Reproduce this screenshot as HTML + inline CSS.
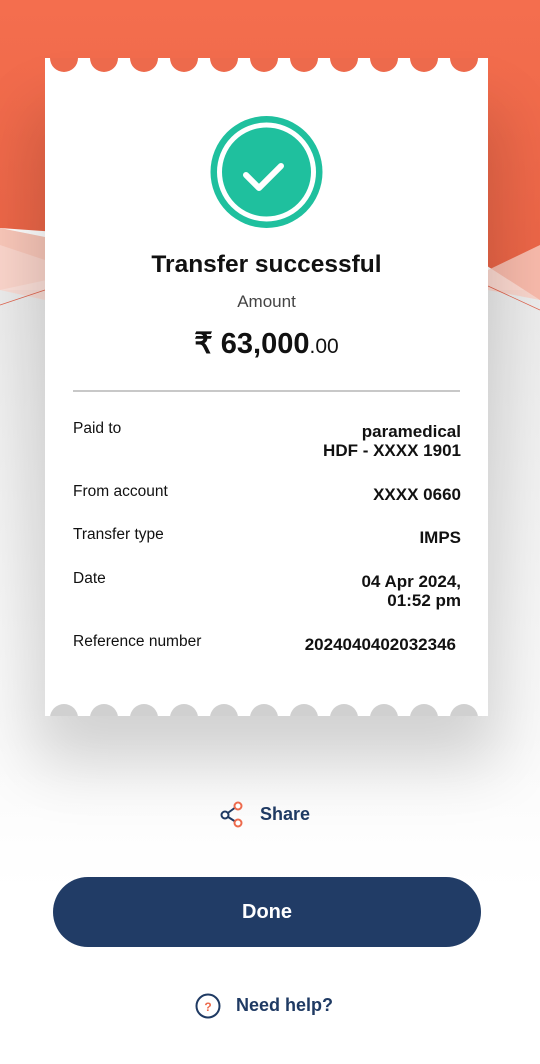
<!DOCTYPE html>
<html><head><meta charset="utf-8"><style>
*{margin:0;padding:0;box-sizing:border-box}
body{width:540px;height:1064px;position:relative;overflow:hidden;background:#fff;font-family:"Liberation Sans",Arial,sans-serif}
.bg{position:absolute;left:0;top:0}
.shadow{position:absolute;left:45px;top:80px;width:443px;height:634px;box-shadow:0 40px 60px 10px rgba(0,0,0,0.16);}
.card{position:absolute;left:45px;top:58px;width:443px;height:658px;background:#fff}
.t{position:absolute;white-space:nowrap}
.lab{left:28px;font-size:15.5px;color:#111}
.val{right:27px;text-align:right;font-size:17px;font-weight:bold;color:#111;line-height:19px}
</style></head><body>
<svg class="bg" width="540" height="1064">
<defs>
<linearGradient id="og" x1="0" y1="0" x2="0" y2="1"><stop offset="0" stop-color="#f46e4e"/><stop offset="1" stop-color="#ea6446"/></linearGradient>
<linearGradient id="gg" x1="0" y1="0" x2="0" y2="1"><stop offset="0" stop-color="#ececec"/><stop offset="1" stop-color="#fff"/></linearGradient>
</defs>
<rect x="0" y="290" width="540" height="600" fill="url(#gg)"/>
<path d="M0 0H540V300L470 255L300 240L100 235L0 228Z" fill="url(#og)"/>
<path d="M0 228L60 240L140 260L0 290Z" fill="#f7b9a8" opacity="0.8"/>
<path d="M0 245L45 260L45 300L0 290Z" fill="#fbd8cf" opacity="0.8"/>
<path d="M488 270L540 245L540 300L488 290Z" fill="#fbd0c4" opacity="0.8"/>
<line x1="0" y1="305" x2="45" y2="290" stroke="#e0604a" stroke-width="0.7"/>
<line x1="488" y1="286" x2="540" y2="310" stroke="#e0604a" stroke-width="0.7"/>
</svg>
<div class="shadow"></div>
<div class="card">
<svg width="443" height="658" style="position:absolute;left:0;top:0">
<g fill="#ed6a4c">
<circle cx="19" cy="0" r="14"/><circle cx="59" cy="0" r="14"/><circle cx="99" cy="0" r="14"/><circle cx="139" cy="0" r="14"/><circle cx="179" cy="0" r="14"/><circle cx="219" cy="0" r="14"/><circle cx="259" cy="0" r="14"/><circle cx="299" cy="0" r="14"/><circle cx="339" cy="0" r="14"/><circle cx="379" cy="0" r="14"/><circle cx="419" cy="0" r="14"/>
</g>
<g fill="#d0d0d0">
<circle cx="19" cy="660" r="14"/><circle cx="59" cy="660" r="14"/><circle cx="99" cy="660" r="14"/><circle cx="139" cy="660" r="14"/><circle cx="179" cy="660" r="14"/><circle cx="219" cy="660" r="14"/><circle cx="259" cy="660" r="14"/><circle cx="299" cy="660" r="14"/><circle cx="339" cy="660" r="14"/><circle cx="379" cy="660" r="14"/><circle cx="419" cy="660" r="14"/>
</g>
<circle cx="221.5" cy="114" r="56" fill="#1fc09e"/>
<circle cx="221.5" cy="114" r="47" fill="none" stroke="#fff" stroke-width="5"/>
<path d="M201 117L214 130L236 108" fill="none" stroke="#fff" stroke-width="6" stroke-linecap="round" stroke-linejoin="round"/>
<line x1="28" y1="333" x2="415" y2="333" stroke="#c8c8c8" stroke-width="2"/>
</svg>
<div class="t" style="left:0;width:443px;text-align:center;top:193px;font-size:24.5px;font-weight:bold;color:#111">Transfer successful</div>
<div class="t" style="left:0;width:443px;text-align:center;top:234px;font-size:17px;color:#444">Amount</div>
<div class="t" style="left:0;width:443px;text-align:center;top:268px;font-size:29px;font-weight:bold;color:#111">₹ 63,000<span style="font-size:21px;font-weight:normal">.00</span></div>
<div class="t lab" style="top:362px">Paid to</div>
<div class="t val" style="top:364px">paramedical<br>HDF - XXXX 1901</div>
<div class="t lab" style="top:425px">From account</div>
<div class="t val" style="top:427px">XXXX 0660</div>
<div class="t lab" style="top:468px">Transfer type</div>
<div class="t val" style="top:470px">IMPS</div>
<div class="t lab" style="top:512px">Date</div>
<div class="t val" style="top:514px">04 Apr 2024,<br>01:52 pm</div>
<div class="t lab" style="top:575px">Reference number</div>
<div class="t val" style="top:577px;right:32px">2024040402032346</div>
</div>
<svg style="position:absolute;left:218px;top:800px" width="28" height="30">
<path d="M7 15L18 7M7 15L18 22" stroke="#1f3a63" stroke-width="2" fill="none"/>
<circle cx="7" cy="15" r="3.5" fill="#fff" stroke="#1f3a63" stroke-width="2"/>
<circle cx="20" cy="6" r="3.5" fill="#fff" stroke="#ed6a4c" stroke-width="2"/>
<circle cx="20" cy="23" r="3.5" fill="#fff" stroke="#ed6a4c" stroke-width="2"/>
</svg>
<div class="t" style="left:260px;top:804px;font-size:18px;font-weight:bold;color:#1f3a63">Share</div>
<div style="position:absolute;left:53px;top:877px;width:428px;height:70px;border-radius:35px;background:#213c66;color:#fff;font-size:20px;font-weight:bold;text-align:center;line-height:70px">Done</div>
<svg style="position:absolute;left:195px;top:993px" width="26" height="26">
<circle cx="13" cy="13" r="11.5" fill="none" stroke="#1f3a63" stroke-width="2"/>
<text x="13" y="18" text-anchor="middle" font-size="12" font-weight="bold" fill="#ed6a4c" font-family="Liberation Sans">?</text>
</svg>
<div class="t" style="left:236px;top:995px;font-size:18px;font-weight:bold;color:#1f3a63">Need help?</div>
</body></html>
